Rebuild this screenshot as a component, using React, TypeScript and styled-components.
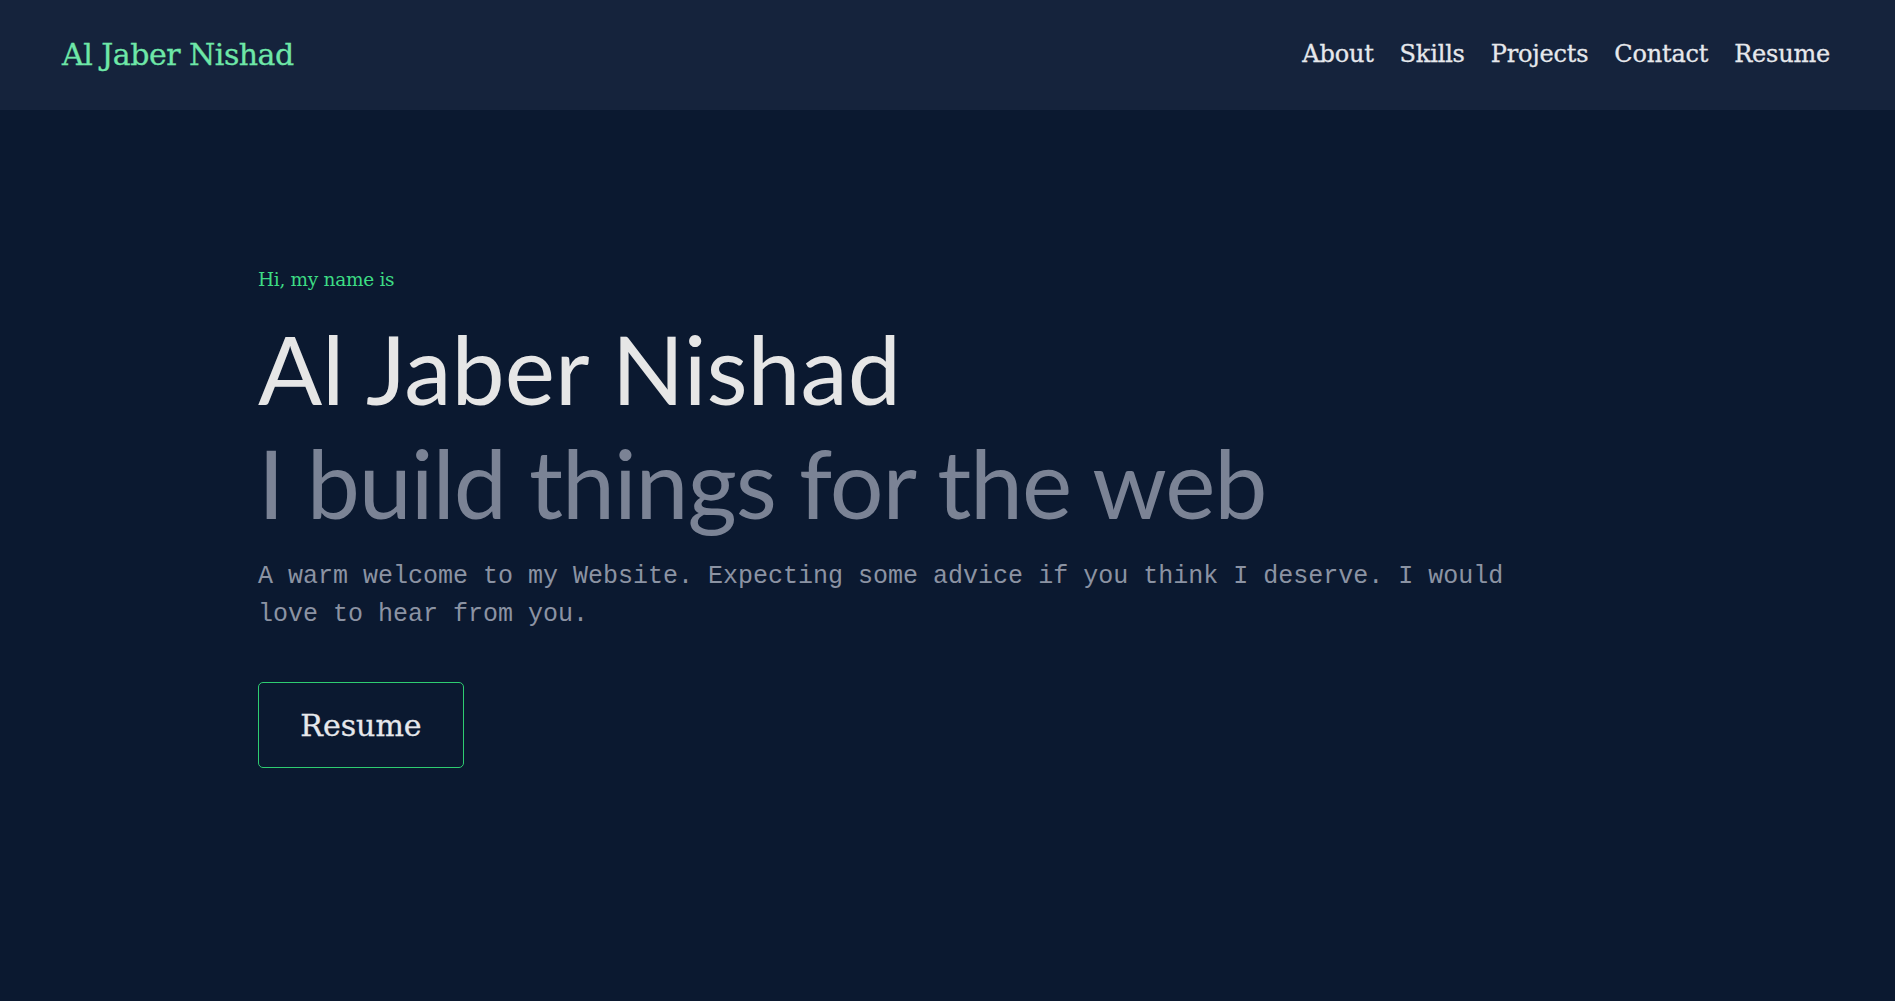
import React from "react";
import styled, { createGlobalStyle } from "styled-components";

const Global = createGlobalStyle`
  html, body { margin: 0; padding: 0; background: #0b1930; }
  #root { min-height: 100vh; }
  * { box-sizing: border-box; }
`;

const Page = styled.div`
  min-height: 1001px;
  background: #0b1930;
  display: flex;
  flex-direction: column;
`;

const Header = styled.header`
  height: 110px;
  background: #15233c;
  display: flex;
  align-items: center;
  justify-content: space-between;
  padding: 0 65px 2px 62px;
`;

const Logo = styled.a`
  font-family: "DejaVu Serif", serif;
  font-size: 30px;
  color: #6ee7a8;
  text-decoration: none;
  letter-spacing: -0.5px;
  -webkit-text-stroke: 0.3px #6ee7a8;
`;

const Nav = styled.nav`
  display: flex;
  gap: 26px;
`;

const NavLink = styled.a`
  font-family: "DejaVu Serif", serif;
  font-size: 24px;
  color: #e6e8ec;
  text-decoration: none;
  letter-spacing: -0.2px;
  -webkit-text-stroke: 0.3px #e6e8ec;
`;

const Hero = styled.main`
  display: flex;
  flex-direction: column;
  align-items: flex-start;
  padding: 159px 0 0 258px;
`;

const Greeting = styled.p`
  margin: 0;
  font-family: "DejaVu Serif", serif;
  font-size: 18.5px;
  line-height: 22px;
  color: #3ddc84;
  letter-spacing: -0.3px;
`;

const Title = styled.h1<{ $muted?: boolean }>`
  margin: 0;
  font-family: Lato, sans-serif;
  font-weight: 400;
  font-size: 95px;
  line-height: 114px;
  color: ${(p) => (p.$muted ? "#7b8395" : "#e6e6e6")};
  letter-spacing: ${(p) => (p.$muted ? "-1.1px" : "0")};
`;

const Name = styled(Title)`
  margin-top: 20px;
`;

const Intro = styled.p`
  margin: 19px 0 0;
  max-width: 1260px;
  font-family: "Liberation Mono", monospace;
  font-size: 25px;
  line-height: 38px;
  color: #8b93a3;
`;

const ResumeButton = styled.a`
  margin-top: 48px;
  display: inline-flex;
  align-items: center;
  justify-content: center;
  width: 206px;
  height: 86px;
  border: 1px solid #2ecc71;
  border-radius: 5px;
  font-family: "DejaVu Serif", serif;
  font-size: 30px;
  color: #e6e8ec;
  text-decoration: none;
  -webkit-text-stroke: 0.3px #e6e8ec;
`;

export default function App() {
  return (
    <Page>
      <Global />
      <Header>
        <Logo href="#">Al Jaber Nishad</Logo>
        <Nav>
          <NavLink href="#about">About</NavLink>
          <NavLink href="#skills">Skills</NavLink>
          <NavLink href="#projects">Projects</NavLink>
          <NavLink href="#contact">Contact</NavLink>
          <NavLink href="#resume">Resume</NavLink>
        </Nav>
      </Header>
      <Hero>
        <Greeting>Hi, my name is</Greeting>
        <Name as="h1">Al Jaber Nishad</Name>
        <Title as="h2" $muted>
          I build things for the web
        </Title>
        <Intro>
          A warm welcome to my Website. Expecting some advice if you think I
          deserve. I would love to hear from you.
        </Intro>
        <ResumeButton href="#">Resume</ResumeButton>
      </Hero>
    </Page>
  );
}
